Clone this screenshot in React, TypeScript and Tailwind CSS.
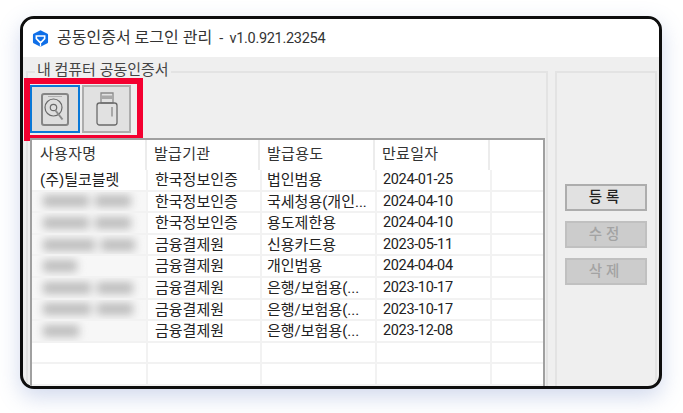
const FONT = "font-['Roboto','Noto_Sans_CJK_KR',sans-serif]";

const rows: [string, string, string, string, number[]][] = [
  ["(주)틸코블렛", "한국정보인증", "법인범용", "2024-01-25", []],
  ["", "한국정보인증", "국세청용(개인...", "2024-04-10", [46, 36]],
  ["", "한국정보인증", "용도제한용", "2024-04-10", [46, 36]],
  ["", "금융결제원", "신용카드용", "2023-05-11", [52, 34]],
  ["", "금융결제원", "개인범용", "2024-04-04", [34]],
  ["", "금융결제원", "은행/보험용(...", "2023-10-17", [48, 36]],
  ["", "금융결제원", "은행/보험용(...", "2023-10-17", [48, 36]],
  ["", "금융결제원", "은행/보험용(...", "2023-12-08", [36]],
  ["", "", "", "", []],
  ["", "", "", "", []],
];

function Logo() {
  return (
    <svg width="17" height="17" viewBox="0 0 18 18" className="shrink-0">
      <path d="M9 1.5 15.8 5v8L9 16.5 2.2 13V5Z" fill="#0f6fe8" stroke="#0f6fe8" strokeWidth="2.4" strokeLinejoin="round" />
      <path d="M4.6 6.4h8.8v2.8L9.8 12.8H8.2L4.6 9.2Z" fill="none" stroke="#fff" strokeWidth="1.7" />
      <path d="M9 12.5v5" stroke="#fff" strokeWidth="1.4" />
    </svg>
  );
}

function Disk() {
  return (
    <svg width="28" height="33" viewBox="0 0 28 33" fill="none" stroke="#6a6a6a" strokeWidth="1.2">
      <rect x="1" y="1" width="26" height="31" rx="2" stroke="#858585" strokeWidth="2" />
      <circle cx="12.5" cy="14.5" r="8.5" />
      <circle cx="12.5" cy="14.5" r="3.2" />
      <path d="m14.5 17.5 7 9" strokeWidth="2" stroke="#8a8a8a" />
      <path d="M7 3.5h14" stroke="#b0b0b0" />
    </svg>
  );
}

function Usb() {
  return (
    <svg width="22" height="34" viewBox="0 0 22 34" fill="none" stroke="#6a6a6a" strokeWidth="1.3">
      <path d="M5 1h12v10H5Z" stroke="#8a8a8a" />
      <path d="M5 3.5h12v3.5H5Z" fill="#a8a8a8" stroke="none" />
      <rect x="1" y="11" width="20" height="22" rx="2.5" />
      <path d="M16 15v9.5" stroke="#888" />
    </svg>
  );
}

function ActionButton({ label, disabled }: { label: string; disabled?: boolean }) {
  return (
    <div
      className={
        disabled
          ? "flex h-[27px] w-[82px] items-center justify-center border-2 border-[#c0c0c0] bg-[#cccccc] text-[14.5px] font-medium tracking-[4px] text-[#a3a3a3]"
          : "flex h-[27px] w-[82px] items-center justify-center border-2 border-[#adadad] bg-[#e1e1e1] text-[14.5px] font-medium tracking-[4px] text-[#222]"
      }
    >
      {label}
    </div>
  );
}

export default function App() {
  return (
    <div className={`h-[413px] w-[683px] overflow-hidden bg-white pl-[20px] pt-[16px] ${FONT}`}>
      <div className="flex h-[373px] w-[642px] flex-col overflow-hidden rounded-[14px] border-[3px] border-[#0e0e0e] bg-[#efefef] shadow-[0_8px_22px_rgba(90,120,190,0.28)]">
        <div className="flex h-[38px] shrink-0 items-center gap-[8px] bg-white pl-[9px] text-[16px] text-[#333]">
          <Logo />
          <span className="flex items-baseline gap-[7px]">
            공동인증서 로그인 관리
            <span className="text-[14.5px] tracking-[-0.3px]">-&nbsp;&nbsp;v1.0.921.23254</span>
          </span>
        </div>
        <div className="flex min-h-0 flex-1 gap-[7px] pl-[3px] pt-[14px]">
          <div className="relative h-[340px] w-[522px] shrink-0 border-2 border-[#e3e3e3] pl-[2px] pt-[5px]">
            <span className="absolute left-[7px] top-[-12px] bg-[#efefef] px-[2px] text-[15px] leading-[18px] text-[#444]">
              내 컴퓨터 공동인증서
            </span>
            <div className="relative z-10 ml-[-6px] flex h-[63px] w-[119px] gap-[2px] border-[6px] border-[#f40030] pt-[1px]">
              <div className="flex h-[48px] w-[50px] items-center justify-center border-[2px] border-[#0a78d7] bg-[#dddddd]">
                <Disk />
              </div>
              <div className="flex h-[48px] w-[49px] items-center justify-center border-2 border-[#adadad] bg-[#e1e1e1]">
                <Usb />
              </div>
            </div>
            <div className="relative z-20 mt-[-3px] h-[260px] w-[515px] border-x-2 border-t-2 border-x-[#a0a0a0] border-t-[#a0a0a0] bg-white">
              <div className="grid h-[30px] grid-cols-[115px_113px_115px_115px_1fr] text-[15px] tracking-[0.3px] text-[#333]">
                {["사용자명", "발급기관", "발급용도", "만료일자", ""].map((h, i) => (
                  <div key={i} className="flex items-center border-r-2 border-[#ececec] pb-[2px] pl-[7px] first:pl-[8px] last:border-r-0">
                    {h}
                  </div>
                ))}
              </div>
              {rows.map((r, i) => (
                <div
                  key={i}
                  className="grid h-[21.6px] grid-cols-[116px_114px_115px_115px_1fr] border-b-2 border-[#f2f2f2] text-[15px] leading-[20px] text-[#222]"
                >
                  <div className={r[4].length > 0 ? "flex items-center overflow-hidden border-r-2 border-[#f2f2f2] bg-[#f7f7f7] pl-[7px]" : "flex items-center overflow-hidden border-r-2 border-[#f2f2f2] pl-[8px]"}>
                    {r[0]}
                    {r[4].length > 0 && (
                      <div className="flex gap-[6px] pl-[4px] blur-[4px]">
                        {r[4].map((w, j) => (
                          <div key={j} className="h-[12px] bg-[#bdbdbd]" style={{ width: w }} />
                        ))}
                      </div>
                    )}
                  </div>
                  <div className="overflow-hidden whitespace-nowrap border-r-2 border-[#f2f2f2] pl-[7px]">{r[1]}</div>
                  <div className="overflow-hidden whitespace-nowrap border-r-2 border-[#f2f2f2] pl-[5px]">{r[2]}</div>
                  <div className="overflow-hidden whitespace-nowrap border-r-2 border-[#f2f2f2] pl-[6px] text-[14.5px] tracking-[-0.35px]">{r[3]}</div>
                  <div />
                </div>
              ))}
            </div>
          </div>
          <div className="flex h-[340px] w-[102px] shrink-0 flex-col items-center gap-[10px] border-2 border-[#e3e3e3] pt-[111px]">
            <ActionButton label="등록" />
            <ActionButton label="수정" disabled />
            <ActionButton label="삭제" disabled />
          </div>
        </div>
      </div>
    </div>
  );
}
